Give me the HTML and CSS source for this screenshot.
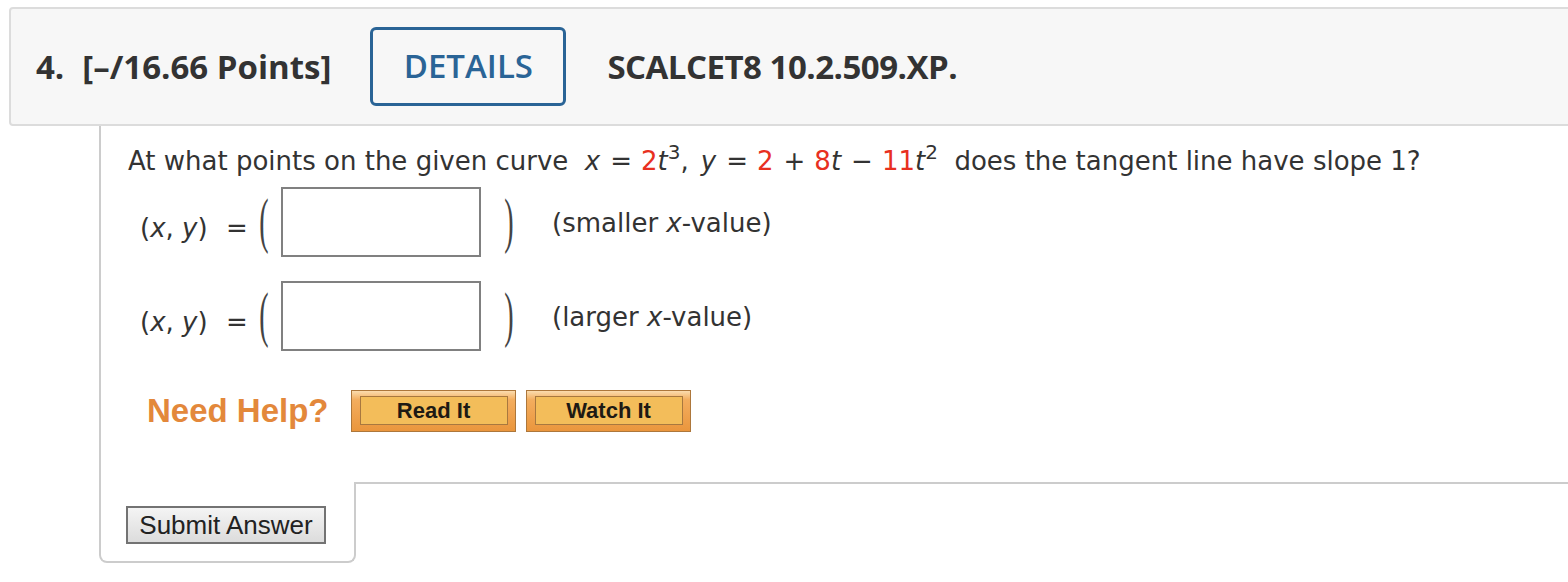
FILE: index.html
```html
<!DOCTYPE html>
<html>
<head>
<meta charset="utf-8">
<link rel="stylesheet" href="styles.css">
</head>
<body>
<div class="header">
  <span class="qnum">4.</span>
  <span class="points">[–/16.66 Points]</span>
  <span class="details">DETAILS</span>
  <span class="code">SCALCET8 10.2.509.XP.</span>
</div>
<div class="qbody">
  <div class="content">
    <p class="question">At what points on the given curve&nbsp; <i>x</i><span class="op">=</span><span class="red">2</span><i>t</i><sup>3</sup><span class="comma">,</span><i>y</i><span class="op">=</span><span class="red">2</span><span class="op">+</span><span class="red">8</span><i>t</i><span class="op">&minus;</span><span class="red">11</span><i>t</i><sup>2</sup>&nbsp; does the tangent line have slope 1?</p>
    <div class="row">
      <span class="lhs">(<i>x</i>, <i>y</i>)</span>
      <span class="eq">=</span>
      <span class="paren">(</span>
      <span class="answer"></span>
      <span class="paren">)</span>
      <span class="label">(smaller <i>x</i>-value)</span>
    </div>
    <div class="row">
      <span class="lhs">(<i>x</i>, <i>y</i>)</span>
      <span class="eq">=</span>
      <span class="paren">(</span>
      <span class="answer"></span>
      <span class="paren">)</span>
      <span class="label">(larger <i>x</i>-value)</span>
    </div>
    <div class="help">
      <span class="needhelp">Need Help?</span>
      <span class="hbtn"><span class="hbtn-in">Read It</span></span>
      <span class="hbtn"><span class="hbtn-in">Watch It</span></span>
    </div>
  </div>
  <div class="footer">
    <div class="tab"><span class="submit">Submit Answer</span></div>
    <div class="rest"></div>
  </div>
</div>
</body>
</html>
```
FILE: styles.css
```css
html, body {
  margin: 0;
  padding: 0;
  background: #ffffff;
  overflow: hidden;
}
body {
  width: 1568px;
  height: 582px;
  font-family: "DejaVu Sans", Verdana, sans-serif;
  color: #333333;
}
.header {
  margin: 7px 0 0 9px;
  width: 1600px;
  height: 115px;
  box-sizing: content-box;
  border: 2px solid #dcdcdc;
  border-radius: 4px;
  background: #f7f7f7;
  display: flex;
  align-items: center;
  padding-left: 25px;
  font-family: "Open Sans", sans-serif;
  font-size: 33px;
  font-weight: 700;
  color: #333333;
}
.qnum {
  margin-right: 18px;
}
.points {
  margin-right: 39px;
}
.details {
  box-sizing: border-box;
  width: 196px;
  height: 79px;
  border: 3px solid #2a6496;
  border-radius: 6px;
  color: #2a6496;
  font-weight: 600;
  display: flex;
  align-items: center;
  justify-content: center;
  margin-right: 41px;
  padding-bottom: 2px;
}
.code {
  font-weight: 700;
  letter-spacing: -0.5px;
}
.qbody {
  margin-left: 99px;
}
.content {
  border-left: 2px solid #cccccc;
  padding: 17px 0 50px 27px;
}
.question {
  margin: 0;
  font-size: 26px;
  line-height: 36px;
  white-space: nowrap;
}
.question sup {
  font-size: 20px;
  line-height: 0;
  vertical-align: 11px;
}
.op {
  margin: 0 9px 0 10px;
}
.comma {
  margin-right: 12px;
}
.red {
  color: #e8301f;
}
.row {
  display: flex;
  align-items: center;
  height: 70px;
  margin-top: 8px;
  font-size: 26px;
  padding-left: 12px;
}
.row + .row {
  margin-top: 24px;
}
.lhs {
  width: 86px;
  padding-top: 12px;
}
.eq {
  width: 32px;
  padding-top: 12px;
}
.paren {
  font-family: "Liberation Serif", serif;
  font-size: 28px;
  font-weight: 400;
  display: inline-block;
  transform: scale(1, 2.15);
  color: #444;
  width: 12px;
  text-align: center;
}
.answer {
  box-sizing: border-box;
  width: 200px;
  height: 70px;
  border: 2px solid #808080;
  background: #ffffff;
  margin: 0 22px 0 11px;
}
.label {
  margin-left: 37px;
  padding-top: 2px;
}
.help {
  display: flex;
  align-items: center;
  margin-top: 39px;
  padding-left: 19px;
  height: 42px;
}
.needhelp {
  font-family: "Liberation Sans", Arial, sans-serif;
  font-weight: 700;
  font-size: 33px;
  color: #e3883b;
  margin-right: 22px;
}
.hbtn {
  box-sizing: border-box;
  width: 165px;
  height: 42px;
  border: 1px solid #ad773b;
  background: linear-gradient(#fbdcae 0, #f3ad5e 22%, #ea963d 100%);
  padding: 5px 7px 6px 8px;
  margin-right: 10px;
  display: flex;
}
.hbtn-in {
  flex: 1;
  border: 1px solid #a8783f;
  background: #f3bd5a;
  font-family: "Liberation Sans", Arial, sans-serif;
  font-weight: 700;
  font-size: 22px;
  color: #1e1a14;
  display: flex;
  align-items: center;
  justify-content: center;
  padding-top: 1px;
}
.footer {
  display: flex;
}
.tab {
  border-left: 2px solid #cccccc;
  border-right: 2px solid #cccccc;
  border-bottom: 2px solid #cccccc;
  border-radius: 0 0 8px 8px;
  padding: 24px 28px 17px 25px;
}
.submit {
  box-sizing: border-box;
  display: flex;
  align-items: center;
  justify-content: center;
  width: 200px;
  height: 38px;
  border: 2px solid #737373;
  background: linear-gradient(#f4f4f4, #dcdcdc);
  font-family: "Liberation Sans", Arial, sans-serif;
  font-size: 26px;
  color: #222222;
}
.rest {
  flex: 1;
  border-top: 2px solid #cccccc;
}
```
